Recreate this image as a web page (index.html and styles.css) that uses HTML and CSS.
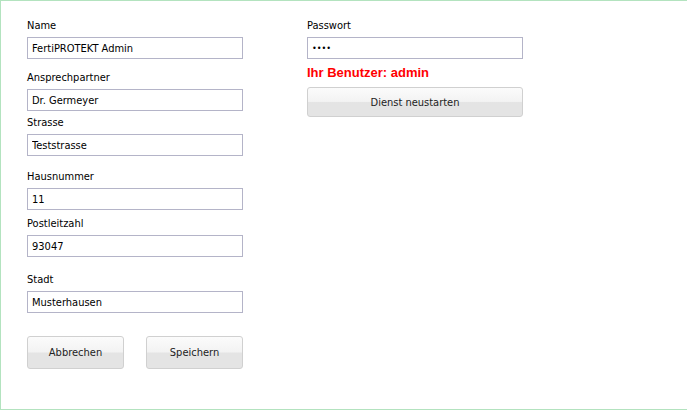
FILE: index.html
```html
<!DOCTYPE html>
<html>
<head>
  <meta charset="utf-8" />
  <title>Einstellungen</title>
  <link rel="stylesheet" href="styles.css">
</head>
<body>
  <div class="panel">
    <!-- Adressdaten -->
    <form class="col col-left">
      <div class="field">
        <label for="name">Name</label>
        <input type="text" id="name" value="FertiPROTEKT Admin">
      </div>
      <div class="field gap-s">
        <label for="kontakt">Ansprechpartner</label>
        <input type="text" id="kontakt" value="Dr. Germeyer">
      </div>
      <div class="field gap-xs">
        <label for="strasse">Strasse</label>
        <input type="text" id="strasse" value="Teststrasse">
      </div>
      <div class="field gap-l">
        <label for="hausnr">Hausnummer</label>
        <input type="text" id="hausnr" value="11">
      </div>
      <div class="field gap-xs2">
        <label for="plz">Postleitzahl</label>
        <input type="text" id="plz" value="93047">
      </div>
      <div class="field gap-xl">
        <label for="stadt">Stadt</label>
        <input type="text" id="stadt" value="Musterhausen">
      </div>
      <div class="actions">
        <button type="button" class="btn">Abbrechen</button>
        <button type="submit" class="btn">Speichern</button>
      </div>
    </form>

    <!-- Zugang -->
    <div class="col col-right">
      <div class="field">
        <label for="passwort">Passwort</label>
        <input type="password" id="passwort" value="1234">
      </div>
      <div class="user-info">Ihr Benutzer: admin</div>
      <button type="button" class="btn btn-wide">Dienst neustarten</button>
    </div>
  </div>
</body>
</html>
```

FILE: styles.css
```css
* {
  margin: 0;
  padding: 0;
  box-sizing: border-box;
}

body {
  font-family: "DejaVu Sans Condensed", "Liberation Sans", sans-serif;
  font-size: 11px;
  color: #000;
  background: white;
}

.panel {
  height: 410px;
  border: 1px solid #b3e3bf;
  border-right: none;
  display: flex;
  padding: 17px 0 0 26px;
  gap: 64px;
}

.col {
  width: 216px;
  display: flex;
  flex-direction: column;
}

.field {
  display: flex;
  flex-direction: column;
}

.field label {
  line-height: 14px;
  padding-top: 1px;
  margin-bottom: 4px;
}

.gap-s   { margin-top: 11px; }
.gap-xs  { margin-top: 4px; }
.gap-l   { margin-top: 13px; }
.gap-xs2 { margin-top: 6px; }
.gap-xl  { margin-top: 15px; }

input[type="text"], input[type="password"] {
  width: 216px;
  height: 22px;
  border: 1px solid #b4b4c8;
  padding: 0 4px;
  font-family: inherit;
  font-size: 11px;
  color: #000;
  background: white;
  outline: none;
}

input[type="password"] {
  font-size: 9px;
  letter-spacing: 0;
}

.actions {
  display: flex;
  justify-content: space-between;
  margin-top: 23px;
}

.btn {
  width: 97px;
  height: 33px;
  border: 1px solid #d0d0d0;
  border-radius: 3px;
  background: linear-gradient(#fbfbfb 0%, #f3f3f3 48%, #e4e4e4 52%, #e4e4e4 100%);
  font-family: inherit;
  font-size: 11px;
  color: #222;
  cursor: pointer;
}

.btn-wide {
  width: 216px;
  height: 30px;
}

.user-info {
  font-family: "Liberation Sans", Arial, sans-serif;
  font-weight: bold;
  font-size: 13px;
  color: #ff0000;
  line-height: 16px;
  margin: 6px 0 6px;
}
```
